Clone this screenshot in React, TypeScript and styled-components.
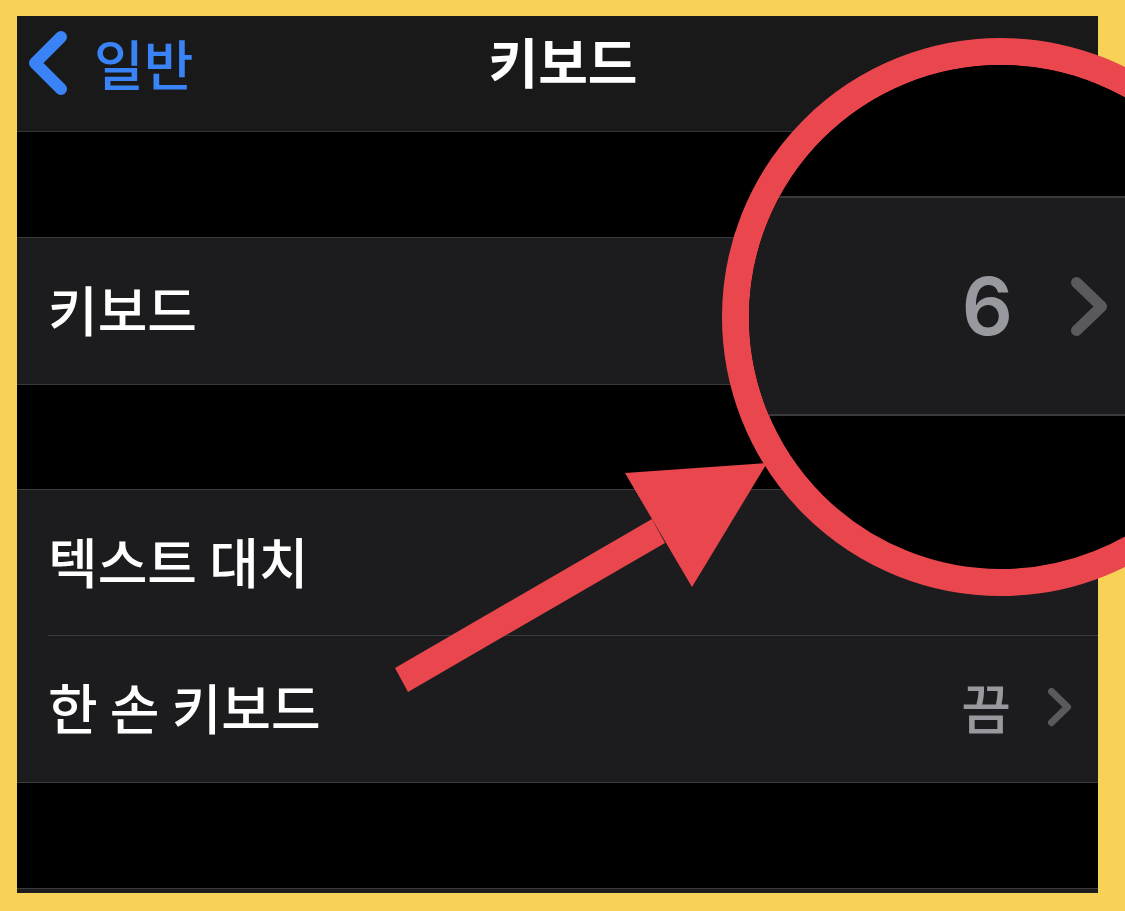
import styled, { createGlobalStyle } from 'styled-components';

const GlobalStyle = createGlobalStyle`
  html, body {
    margin: 0;
    padding: 0;
    background: #f8d257;
    overflow: hidden;
  }
  * {
    box-sizing: border-box;
  }
`;

const Frame = styled.div`
  position: relative;
  width: 1125px;
  height: 911px;
  padding: 16px 27px 18px 17px;
  background: #f8d257;
  overflow: hidden;
  font-family: 'Noto Sans CJK KR', 'Noto Sans', sans-serif;
`;

const Screen = styled.div`
  display: flex;
  flex-direction: column;
  height: 100%;
  background: #000;
  overflow: hidden;
`;

const NavBar = styled.div`
  display: grid;
  grid-template-columns: 1fr auto 1fr;
  align-items: center;
  flex-shrink: 0;
  height: 116px;
  padding: 0 0 22px 11px;
  background: #191919;
  border-bottom: 1px solid #353537;
`;

const BackButton = styled.div`
  display: flex;
  align-items: center;
  gap: 26px;
  color: #3a83f6;
  font-size: 54px;
  font-weight: 500;
  line-height: 1;
`;

const NavTitle = styled.div`
  color: #fff;
  font-size: 54px;
  font-weight: 700;
  line-height: 1;
  margin-top: -4px;
`;

const Spacer = styled.div<{ $h: number }>`
  flex-shrink: 0;
  height: ${(p) => p.$h}px;
  background: #000;
`;

const Group = styled.div`
  flex-shrink: 0;
  background: #1c1c1e;
  border-top: 1px solid #3a3a3c;
  border-bottom: 1px solid #3a3a3c;
`;

const Row = styled.div`
  display: flex;
  height: 146px;
  padding-left: 31px;
`;

const RowBody = styled.div<{ $divider?: boolean }>`
  flex: 1;
  display: flex;
  align-items: center;
  padding: 0 26px 4px 0;
  border-bottom: ${(p) => (p.$divider ? '1px solid #3a3a3c' : 'none')};
`;

const Label = styled.span`
  flex: 1;
  color: #fff;
  font-size: 54px;
  font-weight: 500;
  line-height: 1;
`;

const Value = styled.span`
  color: #98989f;
  font-size: 54px;
  font-weight: 500;
  line-height: 1;
  margin-right: 36px;
`;

const Magnifier = styled.div`
  position: absolute;
  left: 722px;
  top: 38px;
  width: 558px;
  height: 558px;
  border: 27px solid #e9474d;
  border-radius: 50%;
  background: #000;
  overflow: hidden;
  display: flex;
  flex-direction: column;
`;

const MagRow = styled.div`
  display: flex;
  align-items: center;
  justify-content: flex-end;
  flex-shrink: 0;
  height: 220px;
  padding-right: 145px;
  background: #1c1c1e;
  border-top: 2px solid #3a3a3c;
  border-bottom: 2px solid #3a3a3c;
`;

const MagValue = styled.span`
  color: #98989f;
  font-family: Inter, 'Noto Sans', sans-serif;
  font-size: 80px;
  font-weight: 600;
  line-height: 1;
  margin-right: 57px;
`;

const ArrowLayer = styled.svg`
  position: absolute;
  left: 390px;
  top: 455px;
  width: 385px;
  height: 245px;
`;

const Chevron = ({ w, h, sw, color }: { w: number; h: number; sw: number; color: string }) => (
  <svg width={w} height={h} viewBox={`0 0 ${w} ${h}`}>
    <polyline
      points={`${sw / 2 + 1},${sw / 2 + 1} ${w - sw / 2 - 1},${h / 2} ${sw / 2 + 1},${h - sw / 2 - 1}`}
      fill="none"
      stroke={color}
      strokeWidth={sw}
      strokeLinecap="round"
      strokeLinejoin="round"
    />
  </svg>
);

const BackChevron = () => (
  <svg width={40} height={66} viewBox="0 0 40 66">
    <polyline
      points="33,7 7,33 33,59"
      fill="none"
      stroke="#3a83f6"
      strokeWidth={12}
      strokeLinecap="round"
      strokeLinejoin="round"
    />
  </svg>
);

const App = () => (
  <>
    <GlobalStyle />
    <Frame>
      <Screen>
        <NavBar>
          <BackButton>
            <BackChevron />
            일반
          </BackButton>
          <NavTitle>키보드</NavTitle>
          <div />
        </NavBar>
        <Spacer $h={105} />
        <Group>
          <Row>
            <RowBody>
              <Label>키보드</Label>
            </RowBody>
          </Row>
        </Group>
        <Spacer $h={104} />
        <Group>
          <Row>
            <RowBody $divider>
              <Label>텍스트 대치</Label>
            </RowBody>
          </Row>
          <Row>
            <RowBody>
              <Label>한 손 키보드</Label>
              <Value>끔</Value>
              <Chevron w={25} h={40} sw={7} color="#5a5a5e" />
            </RowBody>
          </Row>
        </Group>
        <Spacer $h={105} />
        <Group>
          <Row />
        </Group>
      </Screen>

      <ArrowLayer viewBox="390 455 385 245">
        <polygon points="395,668 408,692 665,543 652,519" fill="#e9474d" />
        <polygon points="625,473 767,463 692,587" fill="#e9474d" />
      </ArrowLayer>

      <Magnifier>
        <Spacer $h={131} />
        <MagRow>
          <MagValue>6</MagValue>
          <Chevron w={38} h={61} sw={11} color="#5a5a5e" />
        </MagRow>
      </Magnifier>
    </Frame>
  </>
);

export default App;
